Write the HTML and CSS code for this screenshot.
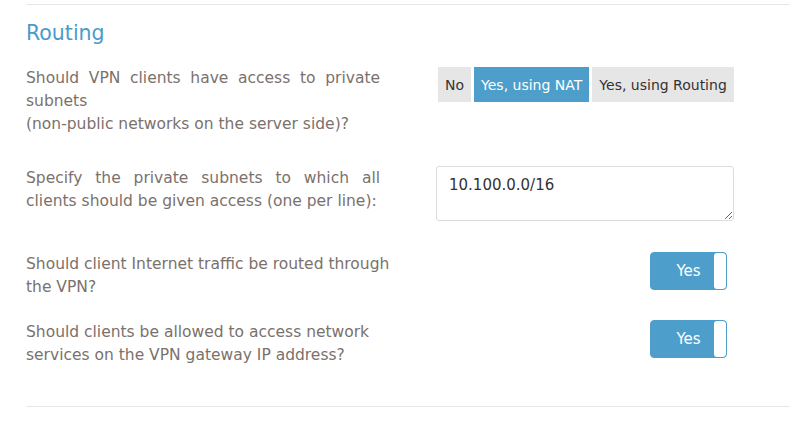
FILE: index.html
```html
<!DOCTYPE html>
<html lang="en">
<head>
    <meta charset="UTF-8">
    <meta name="viewport" content="width=device-width, initial-scale=1.0">
    <title>Routing</title>
    <link rel="stylesheet" href="styles.css">
</head>
<body>
    <div class="section">
        <h2>Routing</h2>

        <div class="row row-subnets">
            <label class="question justify">Should VPN clients have access to private subnets<br>(non-public networks on the server side)?</label>
            <div class="control">
                <div class="btn-group">
                    <button class="btn">No</button>
                    <button class="btn active">Yes, using NAT</button>
                    <button class="btn">Yes, using Routing</button>
                </div>
            </div>
        </div>

        <div class="row row-list">
            <label class="question justify" for="subnets">Specify the private subnets to which all clients should be given access (one per line):</label>
            <div class="control flush">
                <textarea id="subnets" class="subnets">10.100.0.0/16</textarea>
            </div>
        </div>

        <div class="row row-toggle">
            <label class="question wide">Should client Internet traffic be routed through the VPN?</label>
            <div class="control right">
                <div class="toggle"><span class="toggle-label">Yes</span><span class="knob"></span></div>
            </div>
        </div>

        <div class="row row-last">
            <label class="question wide">Should clients be allowed to access network services on the VPN gateway IP address?</label>
            <div class="control right">
                <div class="toggle"><span class="toggle-label">Yes</span><span class="knob"></span></div>
            </div>
        </div>
    </div>
</body>
</html>
```

FILE: styles.css
```css
body {
    font-family: "DejaVu Sans", Verdana, sans-serif;
    background-color: #fff;
    margin: 0;
    padding: 0;
}
.section {
    margin: 4px 16px 0 26px;
    border-top: 1px solid #e6e6e6;
    border-bottom: 1px solid #e6e6e6;
    padding-bottom: 39px;
}
.section h2 {
    color: #4a9bcb;
    font-weight: normal;
    font-size: 20.5px;
    margin: 16px 0 22px 0;
}
.row {
    display: flex;
    align-items: flex-start;
}
.question {
    color: #7b716c;
    font-size: 15.5px;
    line-height: 23px;
}
.justify {
    width: 354px;
    text-align: justify;
}
.wide {
    width: 372px;
}
.control {
    margin-left: 56px;
    width: 298px;
}
.control.flush {
    margin-top: -1px;
}
.control.right {
    margin-left: 38px;
    margin-top: -1px;
    display: flex;
    justify-content: flex-end;
}
.row-subnets { margin-bottom: 31px; }
.row-list { margin-bottom: 32px; }
.row-toggle { margin-bottom: 22px; }
.btn-group {
    display: flex;
    gap: 3px;
    margin-left: 2px;
}
.btn {
    background-color: #e6e6e6;
    color: #333;
    border: none;
    font-family: inherit;
    font-size: 14px;
    height: 35px;
    padding: 0 7px;
    white-space: nowrap;
}
.btn.active {
    background-color: #4d9ecb;
    color: #fff;
}
.subnets {
    display: block;
    width: 298px;
    height: 55px;
    box-sizing: border-box;
    border: 1px solid #dcdcdc;
    border-radius: 3px;
    padding: 9px 12px;
    font-family: inherit;
    font-size: 15px;
    color: #333;
    resize: vertical;
}
.toggle {
    display: flex;
    width: 77px;
    height: 38px;
    box-sizing: border-box;
    border: 1px solid #4d9ecb;
    border-radius: 4px;
    background-color: #4d9ecb;
    overflow: hidden;
    margin-right: 7px;
}
.toggle-label {
    flex: 1;
    color: #fff;
    font-size: 15px;
    line-height: 36px;
    text-align: center;
    padding-left: 12px;
}
.knob {
    width: 12px;
    background: #fff;
    border-radius: 3px;
}
```
